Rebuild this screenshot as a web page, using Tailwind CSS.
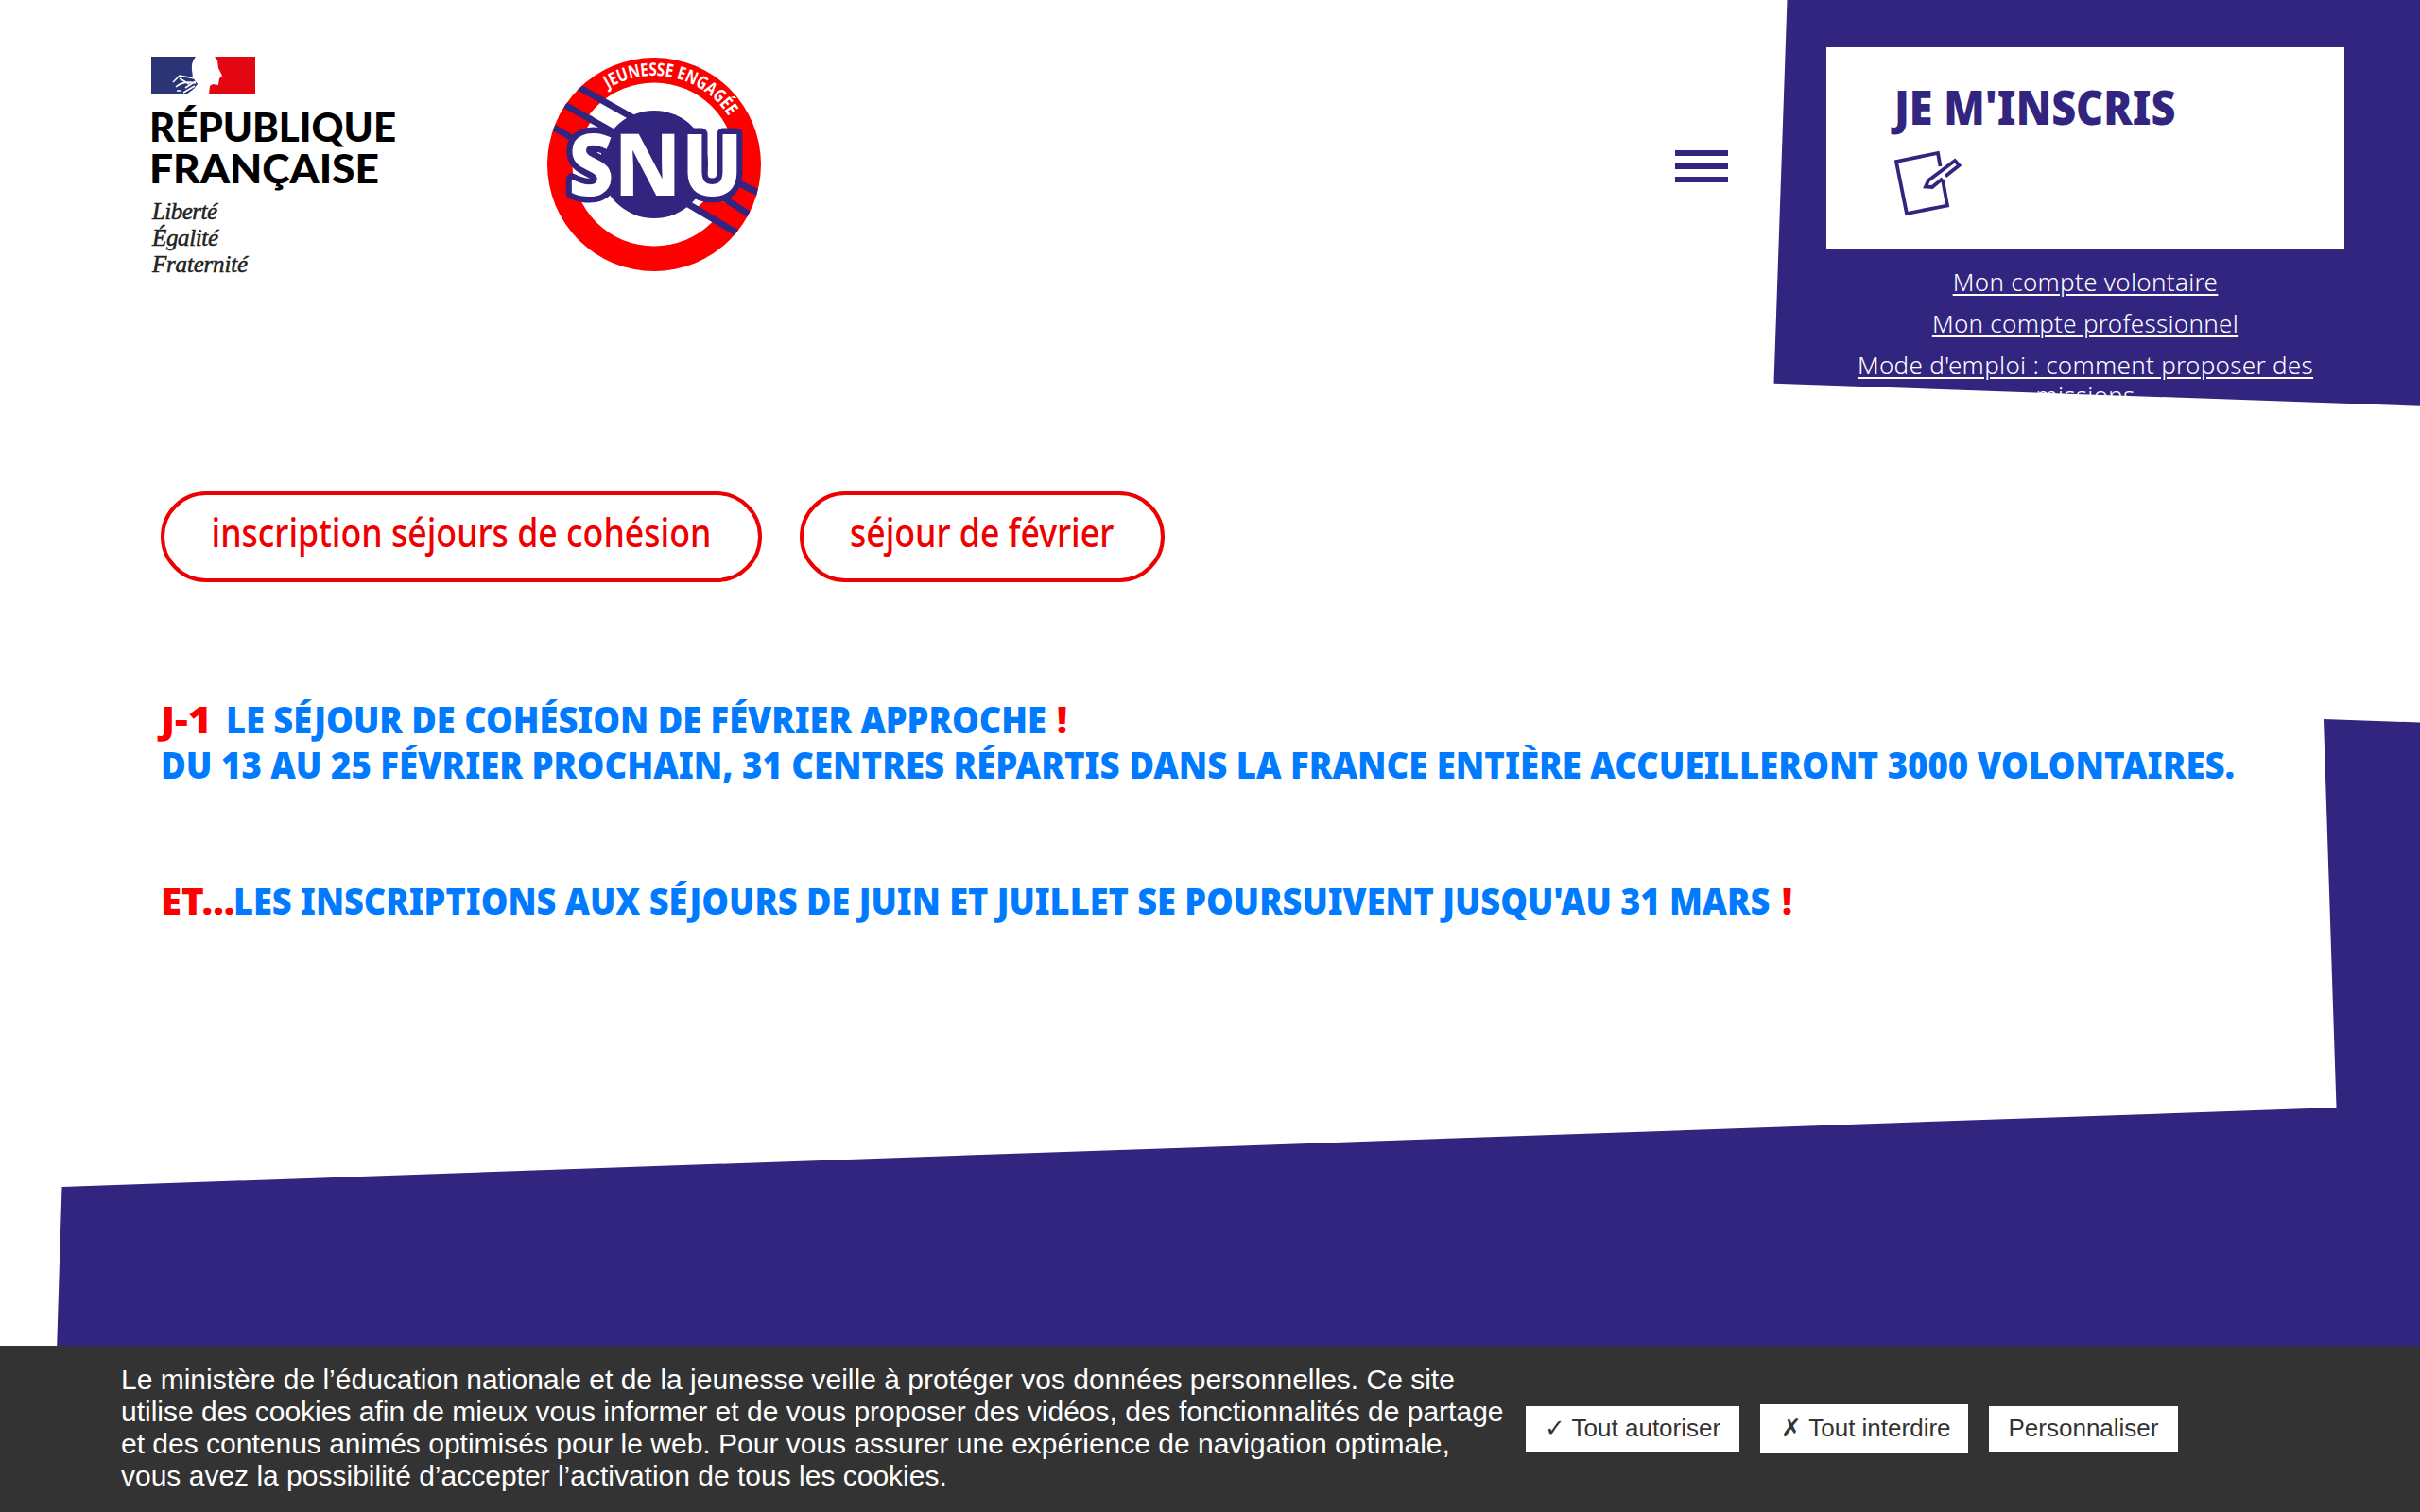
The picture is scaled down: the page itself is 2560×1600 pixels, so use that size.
<!DOCTYPE html>
<html lang="fr">
<head>
<meta charset="utf-8">
<title>SNU</title>
<script src="https://cdn.jsdelivr.net/npm/@tailwindcss/browser@4"></script>
</head>
<body class="relative h-[1600px] w-[2560px] overflow-hidden bg-white font-['Noto_Sans',sans-serif]">
<svg class="absolute inset-0" width="2560" height="1600" viewBox="0 0 2560 1600" fill="#32257f" aria-hidden="true">
  <path d="M1890.5 0H2560V429.7L1876.5 405.8Z"/>
  <path d="M2458 761L2560 764.5V1430H60L65.5 1256L2471.5 1172Z"/>
</svg>
<div class="relative flex h-full flex-col">
  <header class="flex h-[520px] items-start pt-[50px] pl-[160px]">
    <svg class="mt-[10px] w-[262px] shrink-0 overflow-visible" height="232" viewBox="0 0 262 232">
      <path fill="#2b3475" d="M0 0H47Q42 6 43 14L44 22 49 29 45 34 37 40H0Z"/>
      <path fill="#e30613" d="M67 0H110V40H61L62 31 65 29 71 30 72 23 75 20 71 12 70 4Z"/>
      <path fill="none" stroke="#fff" stroke-width="1.600" d="M23 27L30 20 46 23M26 32Q34 25 47 28M27 36H31M34 38L46 31M30 23L40 29M36 33L47 26"/>
      <g font-family="Lato" font-weight="900" font-size="41.5" fill="#000">
        <text x="-2" y="90" textLength="261" lengthAdjust="spacingAndGlyphs">RÉPUBLIQUE</text>
        <text x="-2" y="133.500" textLength="243" lengthAdjust="spacingAndGlyphs">FRANÇAISE</text>
      </g>
      <g font-family="Liberation Serif" font-style="italic" font-size="25" fill="#222" stroke="#222" stroke-width=".5">
        <text x="1" y="172" textLength="69">Liberté</text>
        <text x="1" y="200" textLength="70">Égalité</text>
        <text x="1" y="228" textLength="101">Fraternité</text>
      </g>
    </svg>
    <svg class="ml-[155px] mt-[9px] w-[230px] shrink-0" height="230" viewBox="-115 -115 230 230">
      <defs><clipPath id="disc"><circle r="113"/></clipPath><path id="arc" d="M-94 0A94 94 0 0 1 94 0"/></defs>
      <circle r="113" fill="#fe0000"/><circle r="86.500" fill="#fff"/>
      <g clip-path="url(#disc)">
        <path fill="#fe0000" d="M-93 -66L-64 -50 -74 -34 -103 -51Z M60 32L84 46 72 64 44 47Z"/>
        <path stroke="#32257f" stroke-width="7" fill="none" d="M-82 -83L-20 -48M-98 -65L-20 -21M-110 -41L-60 -13M80 15L112 31M60 27L104 55M36 42L90 74"/>
      </g>
      <circle r="57" fill="#32257f"/>
      <text font-family="Noto Sans" font-weight="800" font-size="91" x="-91" y="33" textLength="185" lengthAdjust="spacingAndGlyphs" fill="#fff" stroke="#32257f" stroke-width="13" stroke-linejoin="round" paint-order="stroke">SNU</text>
      <text font-family="Open Sans" font-weight="700" font-size="19" fill="#fff"><textPath href="#arc" startOffset="96" textLength="145" lengthAdjust="spacingAndGlyphs">JEUNESSE ENGAGÉE</textPath></text>
    </svg>
    <button class="mt-[109px] ml-[965px] flex w-[56px] shrink-0 flex-col gap-2" aria-label="Menu">
      <span class="h-1.5 bg-[#32257f]"></span><span class="h-1.5 bg-[#32257f]"></span><span class="h-1.5 bg-[#32257f]"></span>
    </button>
    <div class="ml-[104px] w-[548px] shrink-0">
      <a class="block h-[214px] bg-white pt-[28px] pl-[72px] text-[#32257f]">
        <div class="w-max origin-left scale-x-[0.918] text-[49px] leading-[70px] font-black whitespace-nowrap">JE M'INSCRIS</div>
        <svg class="mt-[10px]" width="74" height="74" viewBox="0 0 74 74" fill="none" stroke="currentColor" stroke-width="3.800"><path d="M48.500 18L46 4 2 13 13 68 56 59.500 51 32"/><path d="M54 28.500L68.500 17 64 12 36 33 33 39.500 40 40 51 31"/></svg>
      </a>
      <nav class="mt-[18px] flex flex-col items-center gap-3 text-center text-[26px] leading-8 font-light tracking-[0.3px] text-white underline decoration-2 underline-offset-[3px]">
        <a>Mon compte volontaire</a><a>Mon compte professionnel</a><a>Mode d'emploi : comment proposer des<br>missions</a>
      </nav>
    </div>
  </header>
  <main class="flex flex-col pl-[170px]">
    <div class="flex gap-10 text-[41px] leading-[78px] font-medium whitespace-nowrap text-[#ee0000]">
      <a class="flex h-24 w-[636px] justify-center rounded-full border-4 border-[#ee0000]"><span class="scale-x-[0.87]">inscription séjours de cohésion</span></a>
      <a class="flex h-24 w-[386px] justify-center rounded-full border-4 border-[#ee0000]"><span class="scale-x-[0.87]">séjour de février</span></a>
    </div>
    <div class="mt-[121px] text-[38px] leading-[48px] font-black whitespace-nowrap text-[#007bff]">
      <p class="flex"><span class="w-[69px] origin-left scale-x-[1.13] text-[#ff0000]">J-1</span><span class="w-[879px] origin-left scale-x-[0.953]">LE SÉJOUR DE COHÉSION DE FÉVRIER APPROCHE</span><span class="text-[#ff0000]">!</span></p>
      <p class="w-max origin-left scale-x-[0.9615]">DU 13 AU 25 FÉVRIER PROCHAIN, 31 CENTRES RÉPARTIS DANS LA FRANCE ENTIÈRE ACCUEILLERONT 3000 VOLONTAIRES.</p>
      <p class="mt-24 flex"><span class="w-[77px] origin-left scale-x-[1.06] text-[#ff0000]">ET...</span><span class="w-[1638px] origin-left scale-x-[0.95]">LES INSCRIPTIONS AUX SÉJOURS DE JUIN ET JUILLET SE POURSUIVENT JUSQU'AU 31 MARS</span><span class="text-[#ff0000]">!</span></p>
    </div>
  </main>
  <footer class="mt-auto flex h-[176px] items-center bg-[#333] pl-32 font-['Liberation_Sans',sans-serif]">
    <p class="mb-0.5 w-[1486px] text-[30px] leading-[34px] whitespace-nowrap text-white">Le ministère de l’éducation nationale et de la jeunesse veille à protéger vos données personnelles. Ce site<br>utilise des cookies afin de mieux vous informer et de vous proposer des vidéos, des fonctionnalités de partage<br>et des contenus animés optimisés pour le web. Pour vous assurer une expérience de navigation optimale,<br>vous avez la possibilité d’accepter l’activation de tous les cookies.</p>
    <div class="flex items-center gap-[22px] text-[26px] text-[#333]">
      <button class="h-12 w-[226px] bg-white pb-0.5 whitespace-nowrap">✓ Tout autoriser</button>
      <button class="h-[52px] w-[220px] bg-white pb-0.5 pl-1 whitespace-nowrap">✗ Tout interdire</button>
      <button class="h-12 w-[200px] bg-white pb-0.5">Personnaliser</button>
    </div>
  </footer>
</div>
</body>
</html>
